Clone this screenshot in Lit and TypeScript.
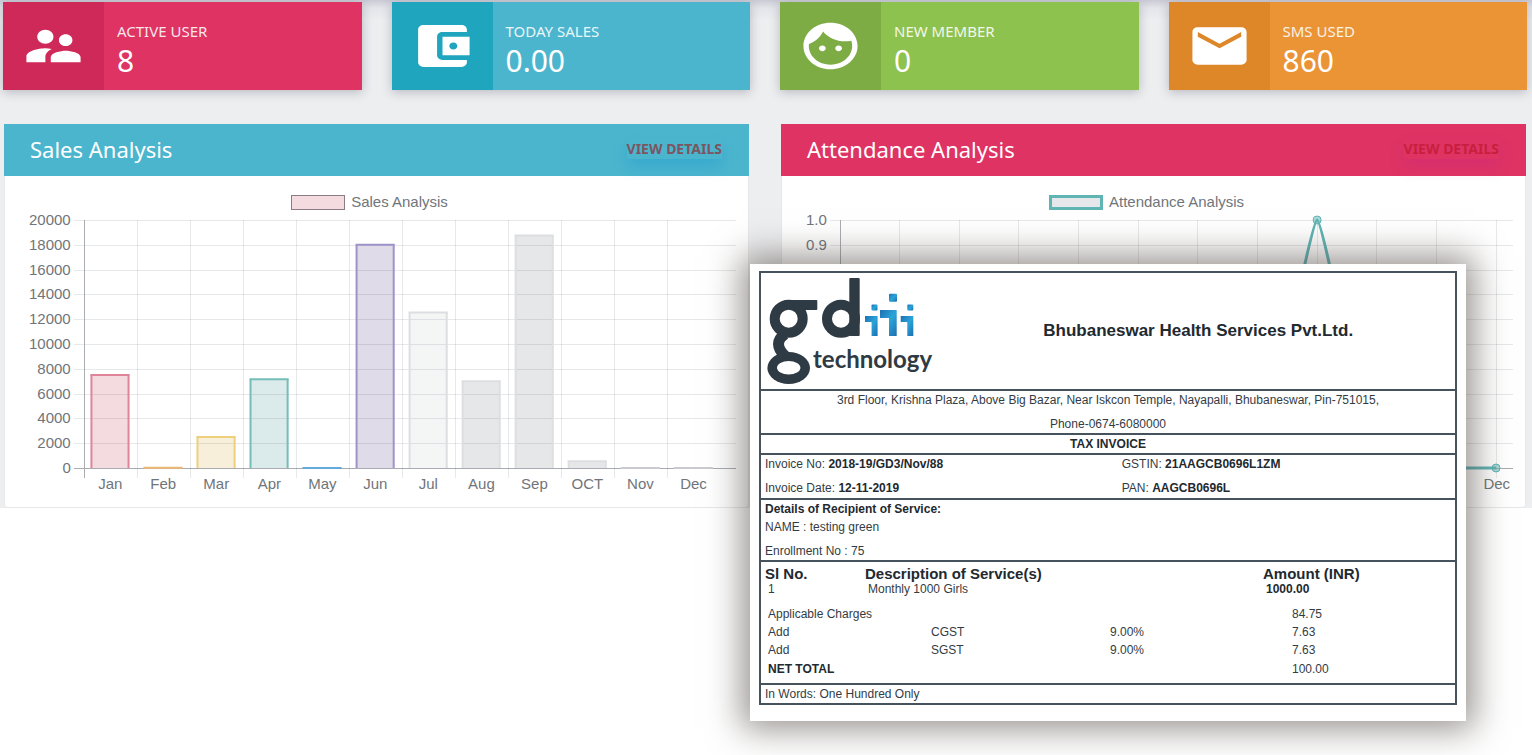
import { LitElement, html, svg, css } from "lit";
import { customElement, property } from "lit/decorators.js";
import { classMap } from "lit/directives/class-map.js";

const MONTHS = ["Jan", "Feb", "Mar", "Apr", "May", "Jun", "Jul", "Aug", "Sep", "OCT", "Nov", "Dec"];
const PLOT_HEIGHT = 248;

const ICONS = {
  users:
    "M16.5 12c1.38 0 2.49-1.12 2.49-2.5S17.88 7 16.5 7C15.12 7 14 8.12 14 9.5s1.12 2.5 2.5 2.5zM9 11c1.66 0 2.99-1.34 2.99-3S10.66 5 9 5C7.34 5 6 6.34 6 8s1.34 3 3 3zm7.5 3c-1.83 0-5.5.92-5.5 2.75V19h11v-2.25c0-1.83-3.67-2.75-5.5-2.75zM9 13c-2.33 0-7 1.17-7 3.5V19h7v-2.25c0-.85.33-2.34 2.37-3.47C10.5 13.1 9.66 13 9 13z",
  wallet:
    "M21 18v1c0 1.1-.9 2-2 2H5c-1.11 0-2-.9-2-2V5c0-1.1.89-2 2-2h14c1.1 0 2 .9 2 2v1h-9c-1.11 0-2 .9-2 2v8c0 1.1.89 2 2 2h9zm-9-2h10V8H12v8zm4-2.5c-.83 0-1.5-.67-1.5-1.5s.67-1.5 1.5-1.5 1.5.67 1.5 1.5-.67 1.5-1.5 1.5z",
  face:
    "M9 11.75c-.69 0-1.25.56-1.25 1.25s.56 1.25 1.25 1.25 1.25-.56 1.25-1.25-.56-1.25-1.25-1.25zm6 0c-.69 0-1.25.56-1.25 1.25s.56 1.25 1.25 1.25 1.25-.56 1.25-1.25-.56-1.25-1.25-1.25zM12 2C6.48 2 2 6.48 2 12s4.48 10 10 10 10-4.48 10-10S17.52 2 12 2zm0 18c-4.41 0-8-3.59-8-8 0-.29.02-.58.05-.86 2.36-1.05 4.23-2.98 5.21-5.37C11.07 8.33 14.05 10 17.42 10c.78 0 1.53-.09 2.25-.26.21.71.33 1.47.33 2.26 0 4.41-3.59 8-8 8z",
  mail:
    "M20 4H4c-1.1 0-1.99.9-1.99 2L2 18c0 1.1.9 2 2 2h16c1.1 0 2-.9 2-2V6c0-1.1-.9-2-2-2zm0 4l-8 5-8-5V6l8 5 8-5v2z",
};

interface Bar {
  value: number;
  fill: string;
  line: string;
}

@customElement("stat-card")
class StatCard extends LitElement {
  @property() label = "";
  @property() value = "";
  @property() tone = "pink";
  @property() icon: keyof typeof ICONS = "users";

  static styles = css`
    :host {
      display: block;
    }
    .card {
      display: flex;
      height: 88px;
      color: #fff;
      box-shadow: 0 2px 10px rgba(60, 60, 80, 0.3);
    }
    .badge {
      flex: 0 0 101px;
      display: grid;
      place-items: center;
    }
    .icon {
      width: 65px;
      height: 56px;
      fill: #fff;
    }
    .text {
      padding: 19px 13px 0;
    }
    .label {
      font-size: 15px;
      line-height: 20px;
      opacity: 0.88;
    }
    .value {
      font-size: 30px;
      line-height: 40px;
    }
    .pink { background: #de3363; }
    .pink .badge { background: #cf2959; }
    .teal { background: #4cb5ce; }
    .teal .badge { background: #1fa5be; }
    .green { background: #8ec24e; }
    .green .badge { background: #7cac43; }
    .orange { background: #ea9435; }
    .orange .badge { background: #dd8729; }
  `;

  render() {
    return html`
      <div class=${classMap({ card: true, [this.tone]: true })}>
        <div class="badge">
          <svg class="icon" viewBox="0 0 24 24" preserveAspectRatio="none" aria-hidden="true">
            <path d=${ICONS[this.icon]}></path>
          </svg>
        </div>
        <div class="text">
          <div class="label">${this.label}</div>
          <div class="value">${this.value}</div>
        </div>
      </div>
    `;
  }
}

@customElement("chart-panel")
class ChartPanel extends LitElement {
  @property() heading = "";
  @property() tone = "teal";
  @property({ type: Array }) ticks: string[] = [];
  @property({ type: Array }) labels: string[] = MONTHS;
  @property({ type: Array }) bars: Bar[] = [];
  @property({ type: Array }) points: number[] = [];

  static styles = css`
    :host {
      display: block;
    }
    .panel {
      background: #fff;
      border: 1px solid #e6e8ea;
      border-top: 0;
      border-radius: 2px 2px 4px 4px;
      color: #70757a;
      font: 15px/16px "Liberation Sans", Arial, sans-serif;
    }
    .head {
      display: flex;
      align-items: center;
      justify-content: space-between;
      box-sizing: border-box;
      height: 52px;
      margin: 0 -1px;
      padding: 0 27px 2px 26px;
      color: #fff;
      font-family: "Noto Sans", "Open Sans", sans-serif;
    }
    .teal .head { background: #4cb5ce; }
    .pink .head { background: #de3363; }
    h2 {
      margin: 0;
      font-size: 22px;
      line-height: 28px;
      font-weight: 400;
    }
    button {
      border: 0;
      padding: 0;
      background: none;
      font: bold 14px/20px "Noto Sans", "Open Sans", sans-serif;
      text-transform: uppercase;
    }
    .teal button {
      color: #7c5560;
      box-shadow: 0 8px 14px rgba(20, 150, 205, 0.35);
    }
    .pink button {
      color: #c81f3e;
      box-shadow: 0 8px 14px rgba(200, 40, 140, 0.3);
    }
    .body {
      padding: 18px 12px 15px 24px;
    }
    .legend {
      display: flex;
      justify-content: center;
      align-items: center;
      gap: 6px;
      padding-right: 26px;
    }
    .swatch {
      box-sizing: border-box;
      width: 54px;
      height: 15px;
      border: 1px solid #8b7b84;
      background: #f3dbdf;
    }
    .pink .swatch {
      border: 3px solid #5fb4b4;
      background: #e6e7ea;
    }
    .chart {
      display: grid;
      grid-template-columns: auto 1fr;
      column-gap: 13px;
      padding-top: 2px;
    }
    ol {
      margin: 0;
      padding: 0;
      list-style: none;
    }
    .yaxis {
      display: flex;
      flex-direction: column;
      justify-content: space-between;
      height: 264px;
      text-align: right;
    }
    .yaxis li {
      height: 16px;
    }
    .plot {
      padding-top: 8px;
      min-width: 0;
    }
    .canvas {
      display: block;
      width: 100%;
      height: 256px;
      overflow: visible;
    }
    .grid {
      stroke: rgba(60, 65, 80, 0.12);
      shape-rendering: crispEdges;
    }
    .axis {
      stroke: #a9acb1;
      shape-rendering: crispEdges;
    }
    .curve {
      fill: none;
      stroke: #5fb4b4;
      stroke-width: 3px;
    }
    .dot {
      fill: rgba(95, 180, 180, 0.5);
      stroke: #5fb4b4;
    }
    .xaxis {
      display: grid;
      grid-template-columns: repeat(12, 1fr);
      height: 16px;
      text-align: center;
    }
    .teal .xaxis {
      margin-right: 16px;
    }
    .pink .xaxis {
      width: 106%;
      margin-left: -4%;
    }
  `;

  private gridLines(step: number) {
    const rows = this.ticks.map((_, i) => {
      const y = Math.round((i * PLOT_HEIGHT) / (this.ticks.length - 1));
      const last = i === this.ticks.length - 1;
      return svg`<line class=${last ? "axis" : "grid"} x1="-10" x2="100%" y1=${y} y2=${y}></line>`;
    });
    const cols = MONTHS.map(
      (_, i) =>
        svg`<line class=${i ? "grid" : "axis"} x1="${i * step}%" x2="${i * step}%" y1="0" y2="258"></line>`
    );
    return [rows, cols];
  }

  private barBox(bar: Bar, index: number, step: number) {
    const height = (bar.value / 20000) * PLOT_HEIGHT;
    const left = (index + 0.14) * step;
    const width = step * 0.7;
    return { height, left, width, right: left + width, top: PLOT_HEIGHT - height };
  }

  private barFills(step: number) {
    return this.bars.map((bar, i) => {
      const b = this.barBox(bar, i, step);
      return svg`<rect x="${b.left}%" y=${b.top} width="${b.width}%" height=${b.height} fill=${bar.fill}></rect>`;
    });
  }

  private barOutlines(step: number) {
    return this.bars.map((bar, i) => {
      const b = this.barBox(bar, i, step);
      return svg`
        <g stroke=${bar.line} stroke-width="2">
          <line x1="${b.left}%" x2="${b.right}%" y1=${b.top} y2=${b.top} stroke-linecap="square"></line>
          <line x1="${b.left}%" x2="${b.left}%" y1=${b.top} y2=${PLOT_HEIGHT}></line>
          <line x1="${b.right}%" x2="${b.right}%" y1=${b.top} y2=${PLOT_HEIGHT}></line>
        </g>
      `;
    });
  }

  private curve(step: number) {
    if (!this.points.length) return null;
    const at = this.points.map((v, i) => [i * step, PLOT_HEIGHT * (1 - v)]);
    const soft = 0.9;
    const d = at
      .map(([x, y], i) => (i ? `C${at[i - 1][0] + soft} ${at[i - 1][1]} ${x - soft} ${y} ${x} ${y}` : `M${x} ${y}`))
      .join("");
    return svg`
      <svg width="100%" height=${PLOT_HEIGHT} viewBox="0 0 100 ${PLOT_HEIGHT}" preserveAspectRatio="none" overflow="visible">
        <path class="curve" d=${d} vector-effect="non-scaling-stroke"></path>
      </svg>
      ${at.map(([x, y]) => svg`<circle class="dot" cx="${x}%" cy=${y} r="4"></circle>`)}
    `;
  }

  render() {
    const step = this.bars.length ? 8.13 : 8.86;
    return html`
      <section class=${classMap({ panel: true, [this.tone]: true })}>
        <header class="head">
          <h2>${this.heading}</h2>
          <button type="button">View details</button>
        </header>
        <div class="body">
          <div class="legend"><span class="swatch"></span><span>${this.heading}</span></div>
          <div class="chart">
            <ol class="yaxis">${this.ticks.map((t) => html`<li>${t}</li>`)}</ol>
            <div class="plot">
              <svg class="canvas" role="img" aria-label=${this.heading}>
                ${this.barFills(step)} ${this.gridLines(step)} ${this.barOutlines(step)} ${this.curve(step)}
              </svg>
              <ol class="xaxis">${this.labels.map((m) => html`<li>${m}</li>`)}</ol>
            </div>
          </div>
        </div>
      </section>
    `;
  }
}

@customElement("invoice-sheet")
class InvoiceSheet extends LitElement {
  static styles = css`
    :host {
      display: block;
    }
    .sheet {
      padding: 7px 9px 16px;
      background: #fff;
      color: #333c44;
      box-shadow: 0 0 32px 8px rgba(75, 68, 62, 0.58);
      font: 12px/18px "Liberation Sans", Arial, sans-serif;
    }
    .frame {
      border: 2px solid #46525c;
    }
    .row {
      border-bottom: 2px solid #46525c;
    }
    .brand {
      display: grid;
      grid-template-columns: 26% 1fr;
      align-items: center;
      height: 116px;
    }
    .logo {
      display: block;
      width: 175px;
      height: 110px;
      margin-left: 4px;
    }
    .logo text {
      font: bold 24px Lato, sans-serif;
    }
    h3 {
      margin: 0;
      text-align: center;
      font-size: 17px;
      line-height: 24px;
      color: #22292f;
    }
    .address {
      text-align: center;
      line-height: 24px;
      height: 47px;
      box-sizing: border-box;
    }
    .address p {
      margin: -3px 0 0;
    }
    .address p + p {
      margin: 0;
    }
    .title {
      text-align: center;
      font-weight: bold;
      color: #22292f;
    }
    .meta {
      display: grid;
      grid-template-columns: 52% 1fr;
      row-gap: 6px;
      padding: 0 4px 1px;
    }
    b {
      color: #22292f;
    }
    .who {
      padding: 0 4px;
    }
    .who p {
      margin: 0;
    }
    .who p + p + p {
      padding-top: 6px;
    }
    table {
      width: 100%;
      border-collapse: collapse;
      table-layout: fixed;
    }
    .c1 { width: 100px; }
    .c2 { width: 63px; }
    .c3 { width: 179px; }
    .c4 { width: 156px; }
    th, td {
      padding: 0 0 0 7px;
      text-align: left;
      font-weight: 400;
    }
    thead th {
      padding: 3px 0 0 4px;
      font-size: 15px;
      line-height: 17px;
      font-weight: bold;
      color: #22292f;
    }
    .item > * {
      line-height: 14px;
      padding-bottom: 9px;
    }
    .amount {
      padding-left: 33px;
    }
    .words {
      padding: 0 4px;
    }
    .total > * {
      line-height: 20px;
      padding-bottom: 4px;
    }
  `;

  private logo() {
    return html`
      <svg class="logo" viewBox="0 0 175 110" role="img" aria-label="gd technology">
        <defs>
          <linearGradient id="water" x1="0" y1="0" x2="1" y2="1">
            <stop offset="0" stop-color="#1f6fb4"></stop>
            <stop offset="0.5" stop-color="#2aa5d8"></stop>
            <stop offset="1" stop-color="#1d6fae"></stop>
          </linearGradient>
        </defs>
        <g fill="none" stroke="#2f3b44" stroke-width="10">
          <circle cx="23.7" cy="42.7" r="14"></circle>
          <path d="M20 58Q7 67 20 80" stroke-width="11"></path>
          <circle cx="76" cy="42.7" r="14"></circle>
        </g>
        <rect x="24" y="24" width="28.3" height="10" rx="1" fill="#2f3b44"></rect>
        <ellipse cx="23.7" cy="92" rx="21.3" ry="16" fill="#2f3b44"></ellipse>
        <ellipse cx="23.7" cy="91.7" rx="11.7" ry="6.7" fill="#fff"></ellipse>
        <rect x="84.3" y="2" width="10.4" height="58" rx="1" fill="#2f3b44"></rect>
        <g fill="url(#water)">
          <rect x="106.5" y="28.5" width="6" height="6" rx="1"></rect>
          <path d="M100 40h12.6v20h-6v-14h-6.6z"></path>
          <rect x="124" y="17.7" width="8" height="8" rx="1"></rect>
          <path d="M115 34h16.7v26h-7.7v-18h-9z"></path>
          <rect x="142.3" y="28.5" width="6" height="6" rx="1"></rect>
          <path d="M135.7 40h12.6v20h-6v-14h-6.6z"></path>
        </g>
        <text x="48" y="92" fill="#2f3b44">technology</text>
      </svg>
    `;
  }

  render() {
    return html`
      <article class="sheet">
        <div class="frame">
          <div class="row brand">${this.logo()}<h3>Bhubaneswar Health Services Pvt.Ltd.</h3></div>
          <div class="row address">
            <p>3rd Floor, Krishna Plaza, Above Big Bazar, Near Iskcon Temple, Nayapalli, Bhubaneswar, Pin-751015,</p>
            <p>Phone-0674-6080000</p>
          </div>
          <div class="row title">TAX INVOICE</div>
          <div class="row meta">
            <span>Invoice No: <b>2018-19/GD3/Nov/88</b></span>
            <span>GSTIN: <b>21AAGCB0696L1ZM</b></span>
            <span>Invoice Date: <b>12-11-2019</b></span>
            <span>PAN: <b>AAGCB0696L</b></span>
          </div>
          <div class="row who">
            <p><b>Details of Recipient of Service:</b></p>
            <p>NAME : testing green</p>
            <p>Enrollment No : 75</p>
          </div>
          <div class="row">
            <table>
              <colgroup>
                <col class="c1" /><col class="c2" /><col class="c3" /><col class="c4" /><col />
              </colgroup>
              <thead>
                <tr>
                  <th>Sl No.</th>
                  <th colspan="3">Description of Service(s)</th>
                  <th>Amount (INR)</th>
                </tr>
              </thead>
              <tbody>
                <tr class="item">
                  <td>1</td>
                  <td colspan="3">Monthly 1000 Girls</td>
                  <td><b>1000.00</b></td>
                </tr>
                <tr>
                  <td colspan="4">Applicable Charges</td>
                  <td class="amount">84.75</td>
                </tr>
                ${["CGST", "SGST"].map(
                  (tax) => html`
                    <tr>
                      <td colspan="2">Add</td>
                      <td>${tax}</td>
                      <td>9.00%</td>
                      <td class="amount">7.63</td>
                    </tr>
                  `
                )}
                <tr class="total">
                  <td colspan="4"><b>NET TOTAL</b></td>
                  <td class="amount">100.00</td>
                </tr>
              </tbody>
            </table>
          </div>
          <div class="words">In Words: One Hundred Only</div>
        </div>
      </article>
    `;
  }
}

@customElement("app-root")
class AppRoot extends LitElement {
  static styles = css`
    :host {
      display: block;
      position: relative;
      min-height: 100vh;
      overflow: hidden;
      background: #fff;
      font-family: "Noto Sans", "Open Sans", sans-serif;
    }
    .dashboard {
      padding: 2px 5px 0 3px;
      background: linear-gradient(#c9cad4, #e4e5ea 8px, #edeef0 20px);
    }
    .stats {
      display: grid;
      grid-template-columns: repeat(4, 1fr);
      gap: 30px;
    }
    .panels {
      display: grid;
      grid-template-columns: repeat(2, 1fr);
      gap: 32px;
      padding: 34px 1px 0;
    }
    .overlay {
      position: absolute;
      top: 264px;
      left: calc(50% - 16px);
      right: 66px;
    }
  `;

  private sales: Bar[] = [
    { value: 7500, fill: "#f3dbdf", line: "#e0849a" },
    { value: 20, fill: "#f8e6d0", line: "#efb873" },
    { value: 2500, fill: "#f7efda", line: "#edcf7c" },
    { value: 7150, fill: "#dbeaea", line: "#74bdb9" },
    { value: 10, fill: "#d6e8f5", line: "#64a9dc" },
    { value: 18000, fill: "#dfdbe9", line: "#a192c8" },
    { value: 12550, fill: "#f4f6f6", line: "#dcdfe1" },
    { value: 7000, fill: "#e6e7e9", line: "#dddee1" },
    { value: 18750, fill: "#e6e7e9", line: "#dddee1" },
    { value: 550, fill: "#e6e7e9", line: "#dddee1" },
    { value: 0, fill: "#e6e7e9", line: "#c9cbcf" },
    { value: 0, fill: "#e6e7e9", line: "#c9cbcf" },
  ];

  private salesTicks = Array.from({ length: 11 }, (_, i) => String(20000 - i * 2000));

  // The invoice covers the lower part of this chart, so only the exposed labels are filled in.
  private attendanceTicks = Array.from({ length: 11 }, (_, i) => (i < 3 ? (1 - i / 10).toFixed(1) : ""));
  private attendanceLabels = MONTHS.map((m) => (m === "Dec" ? m : ""));
  private attendance = [0, 0, 0, 0, 0, 0, 0, 0, 1, 0, 0, 0];

  render() {
    return html`
      <main class="dashboard">
        <div class="stats">
          <stat-card label="ACTIVE USER" value="8" tone="pink" icon="users"></stat-card>
          <stat-card label="TODAY SALES" value="0.00" tone="teal" icon="wallet"></stat-card>
          <stat-card label="NEW MEMBER" value="0" tone="green" icon="face"></stat-card>
          <stat-card label="SMS USED" value="860" tone="orange" icon="mail"></stat-card>
        </div>
        <div class="panels">
          <chart-panel heading="Sales Analysis" tone="teal" .ticks=${this.salesTicks} .bars=${this.sales}></chart-panel>
          <chart-panel
            heading="Attendance Analysis"
            tone="pink"
            .ticks=${this.attendanceTicks}
            .labels=${this.attendanceLabels}
            .points=${this.attendance}
          ></chart-panel>
        </div>
      </main>
      <invoice-sheet class="overlay"></invoice-sheet>
    `;
  }
}
